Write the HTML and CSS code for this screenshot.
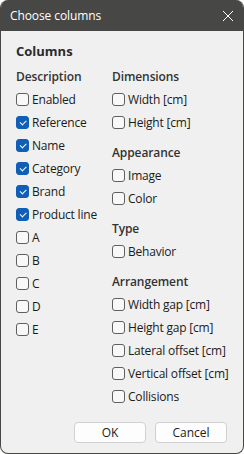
FILE: index.html
```html
<!DOCTYPE html>
<html lang="en">
<head>
<meta charset="utf-8">
<title>Choose columns</title>
<link rel="stylesheet" href="styles.css">
</head>
<body>
<div class="window">
  <div class="titlebar">
    <span class="title">Choose columns</span>
    <svg class="close" width="12" height="12" viewBox="0 0 12 12"><path d="M1 1 L11 11 M11 1 L1 11" stroke="#ffffff" stroke-width="1" fill="none"/></svg>
  </div>
  <div class="content">
    <div class="group-title">Columns</div>
    <div class="columns">
      <div class="col col-left">
        <div class="section">
          <div class="heading">Description</div>
          <label class="row"><span class="cb"></span>Enabled</label>
          <label class="row"><span class="cb on"></span>Reference</label>
          <label class="row"><span class="cb on"></span>Name</label>
          <label class="row"><span class="cb on"></span>Category</label>
          <label class="row"><span class="cb on"></span>Brand</label>
          <label class="row"><span class="cb on"></span>Product line</label>
          <label class="row"><span class="cb"></span>A</label>
          <label class="row"><span class="cb"></span>B</label>
          <label class="row"><span class="cb"></span>C</label>
          <label class="row"><span class="cb"></span>D</label>
          <label class="row"><span class="cb"></span>E</label>
        </div>
      </div>
      <div class="col col-right">
        <div class="section">
          <div class="heading">Dimensions</div>
          <label class="row"><span class="cb"></span>Width [cm]</label>
          <label class="row"><span class="cb"></span>Height [cm]</label>
        </div>
        <div class="section">
          <div class="heading">Appearance</div>
          <label class="row"><span class="cb"></span>Image</label>
          <label class="row"><span class="cb"></span>Color</label>
        </div>
        <div class="section">
          <div class="heading">Type</div>
          <label class="row"><span class="cb"></span>Behavior</label>
        </div>
        <div class="section">
          <div class="heading">Arrangement</div>
          <label class="row"><span class="cb"></span>Width gap [cm]</label>
          <label class="row"><span class="cb"></span>Height gap [cm]</label>
          <label class="row"><span class="cb"></span>Lateral offset [cm]</label>
          <label class="row"><span class="cb"></span>Vertical offset [cm]</label>
          <label class="row"><span class="cb"></span>Collisions</label>
        </div>
      </div>
    </div>
  </div>
  <div class="buttons">
    <button class="btn">OK</button>
    <button class="btn">Cancel</button>
  </div>
</div>
</body>
</html>
```
FILE: styles.css
```css
html, body {
  margin: 0;
  padding: 0;
  background: #ffffff;
}
body {
  font-family: "Open Sans", "Noto Sans", "Liberation Sans", sans-serif;
  font-size: 12px;
  color: #1b1b1b;
}
.window {
  box-sizing: border-box;
  width: 244px;
  height: 454px;
  background: #f0f0f0;
  border: 1px solid #474745;
  border-top: none;
  border-radius: 8px;
  overflow: hidden;
  display: flex;
  flex-direction: column;
}
.titlebar {
  height: 31px;
  flex: none;
  background: #474745;
  display: flex;
  align-items: center;
  justify-content: space-between;
  padding: 0 9px 0 9px;
  color: #ffffff;
}
.title {
  font-size: 12px;
  letter-spacing: -0.1px;
}
.close {
  display: block;
  margin-top: 1px;
}
.content {
  padding: 11px 0 0 15px;
}
.group-title {
  font-weight: 700;
  font-size: 13px;
  line-height: 19px;
  color: #2b2b2b;
}
.columns {
  display: flex;
  margin-top: 4px;
}
.col-left {
  width: 96px;
}
.section + .section {
  margin-top: 7px;
}
.heading {
  height: 23px;
  line-height: 23px;
  font-weight: 600;
  color: #333333;
  letter-spacing: -0.1px;
}
.row {
  display: flex;
  align-items: center;
  height: 23px;
  white-space: nowrap;
  letter-spacing: -0.2px;
}
.cb {
  box-sizing: border-box;
  width: 13px;
  height: 13px;
  border: 1px solid #5f5f5f;
  border-radius: 3px;
  background: #f8f8f8;
  margin-right: 3px;
  flex: none;
  position: relative;
}
.cb.on {
  background: #0f5fb8;
  border-color: #0f5fb8;
}
.cb.on::after {
  content: "";
  position: absolute;
  left: 3px;
  top: 2.5px;
  width: 5px;
  height: 2.5px;
  border-left: 1px solid #ffffff;
  border-bottom: 1px solid #ffffff;
  transform: rotate(-45deg);
}
.buttons {
  margin-top: auto;
  display: flex;
  justify-content: flex-end;
  gap: 9px;
  padding: 0 16px 10px 0;
}
.btn {
  box-sizing: border-box;
  width: 72px;
  height: 21px;
  background: #fdfdfd;
  border: 1px solid #d0d0d0;
  border-radius: 4px;
  font-family: inherit;
  font-size: 12px;
  color: #1b1b1b;
  padding: 0;
}
```
